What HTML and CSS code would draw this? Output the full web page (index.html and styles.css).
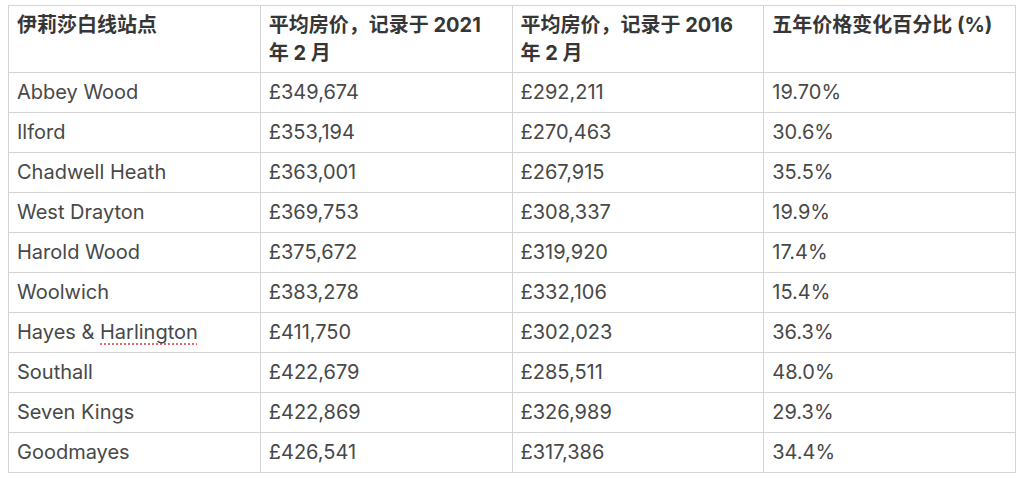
FILE: index.html
```html
<!DOCTYPE html>
<html lang="zh">
<head>
<meta charset="utf-8">
<title>伊莉莎白线站点房价</title>
<link rel="stylesheet" href="styles.css">
</head>
<body>
<table class="prices">
  <thead>
    <tr>
      <th>伊莉莎白线站点</th>
      <th>平均房价，记录于 2021 年 2 月</th>
      <th>平均房价，记录于 2016 年 2 月</th>
      <th>五年价格变化百分比 (%)</th>
    </tr>
  </thead>
  <tbody>
    <tr><td>Abbey Wood</td><td>£349,674</td><td>£292,211</td><td>19.70%</td></tr>
    <tr><td>Ilford</td><td>£353,194</td><td>£270,463</td><td>30.6%</td></tr>
    <tr><td>Chadwell Heath</td><td>£363,001</td><td>£267,915</td><td>35.5%</td></tr>
    <tr><td>West Drayton</td><td>£369,753</td><td>£308,337</td><td>19.9%</td></tr>
    <tr><td>Harold Wood</td><td>£375,672</td><td>£319,920</td><td>17.4%</td></tr>
    <tr><td>Woolwich</td><td>£383,278</td><td>£332,106</td><td>15.4%</td></tr>
    <tr><td>Hayes &amp; <span class="spell">Harlington</span></td><td>£411,750</td><td>£302,023</td><td>36.3%</td></tr>
    <tr><td>Southall</td><td>£422,679</td><td>£285,511</td><td>48.0%</td></tr>
    <tr><td>Seven Kings</td><td>£422,869</td><td>£326,989</td><td>29.3%</td></tr>
    <tr><td>Goodmayes</td><td>£426,541</td><td>£317,386</td><td>34.4%</td></tr>
  </tbody>
</table>
</body>
</html>
```

FILE: styles.css
```css
html, body {
  background: #ffffff;
}
body {
  margin: 5px 8px 0 8px;
  font-family: "Inter", "Noto Sans CJK SC", sans-serif;
  color: #484848;
}
.prices {
  width: 1008px;
  border-collapse: collapse;
  table-layout: fixed;
  border: 1px solid #d4d4d4;
}
.prices th,
.prices td {
  border: 1px solid #d4d4d4;
  text-align: left;
  vertical-align: top;
  font-size: 20px;
  line-height: 28px;
  padding: 5px 8px;
}
.prices th {
  font-weight: 700;
  color: #363636;
  height: 56px;
}
.prices td {
  height: 29px;
}
.spell {
  text-decoration: underline dotted #e36a6a;
  text-decoration-thickness: 2px;
  text-underline-offset: 4px;
}
```
